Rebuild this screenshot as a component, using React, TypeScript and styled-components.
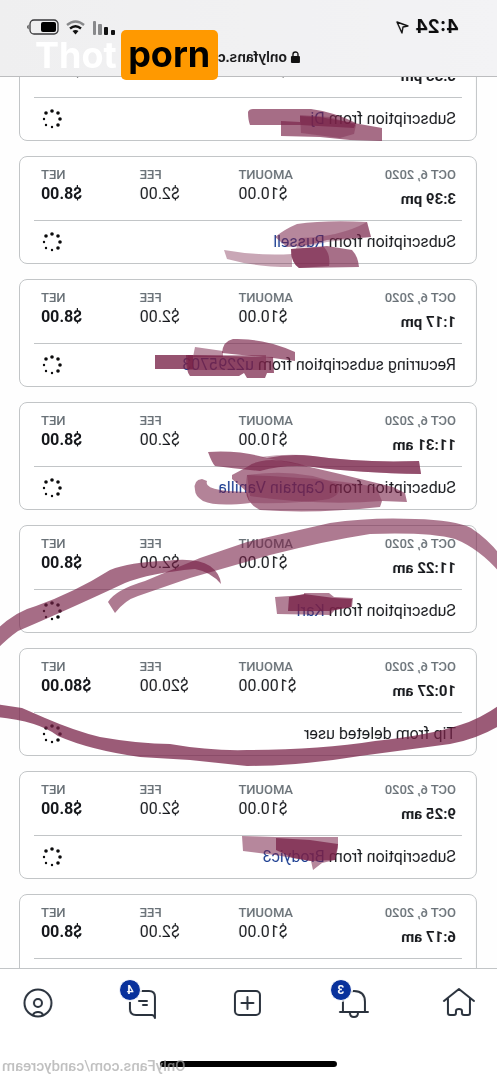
import React from "react";
import styled, { createGlobalStyle } from "styled-components";

const GlobalStyle = createGlobalStyle`
  * { box-sizing: border-box; }
  body { margin: 0; background: #fefefe; }
`;

const Frame = styled.div`
  position: relative;
  height: 100vh;
  overflow: hidden;
  font-family: Roboto, "Liberation Sans", sans-serif;
  color: #16181c;
`;

/* The whole phone screen is shown flipped, as in a front camera picture. */
const Screen = styled.div`
  display: flex;
  flex-direction: column;
  height: 100%;
  transform: scaleX(-1);
`;

const Header = styled.header`
  position: relative;
  z-index: 1;
  flex: none;
  height: 77px;
  padding: 15px 26px 0 38px;
  background: linear-gradient(90deg, #f3f3f5, #efeff0);
  border-bottom: 1px solid #bcbdbf;
`;

const StatusBar = styled.div`
  display: flex;
  align-items: center;
  justify-content: space-between;
  height: 24px;
`;

const Clock = styled.div`
  display: flex;
  align-items: center;
  gap: 6px;
  font: 700 19px/24px Inter, sans-serif;
  color: #0c0c0d;
`;

const StatusIcons = styled.div`
  display: flex;
  align-items: center;
  gap: 7px;
`;

const AddressBar = styled.div`
  display: flex;
  align-items: center;
  justify-content: center;
  gap: 4px;
  margin-top: 8px;
  margin-right: 12px;
  font: 600 14px/20px "Liberation Sans", sans-serif;
  color: #161617;
`;

const List = styled.ul`
  flex: 1;
  min-height: 0;
  margin: -44px 0 0;
  padding: 0 19px 0 20px;
  display: flex;
  flex-direction: column;
  gap: 15px;
  list-style: none;
  overflow: hidden;
`;

const Card = styled.li`
  flex: none;
  height: 108px;
  padding: 0 14px;
  border: 1px solid #c2c5c7;
  border-radius: 8px;
  background: #fff;
`;

const Figures = styled.div`
  display: grid;
  grid-template-columns: 6fr 5fr 5fr 5fr;
  height: 64px;
  padding: 9px 7px 0 6px;
  border-bottom: 1px solid #c2c5c7;
`;

const Column = styled.div<{ $end?: boolean }>`
  text-align: ${(p) => (p.$end ? "right" : "left")};
`;

const Label = styled.div`
  font-size: 13px;
  line-height: 18px;
  font-weight: 500;
  color: #6a7278;
  white-space: nowrap;
`;

const Value = styled.div<{ $bold?: boolean }>`
  font-size: 16px;
  line-height: 20px;
  font-weight: ${(p) => (p.$bold ? 700 : 400)};
`;

const Time = styled.div`
  margin-top: 5px;
  font-size: 15px;
  line-height: 20px;
  font-weight: 700;
`;

const Detail = styled.div`
  display: flex;
  align-items: center;
  justify-content: space-between;
  height: 42px;
  padding: 0 7px 0 6px;
  font-size: 16px;
  line-height: 20px;
`;

const UserLink = styled.a`
  color: #1d3f92;
  text-decoration: none;
`;

const Nav = styled.nav`
  position: relative;
  z-index: 1;
  flex: none;
  display: flex;
  justify-content: space-between;
  height: 92px;
  padding: 18px 22px 0;
  border-top: 1px solid #c2c5c7;
  background: #fff;
`;

const NavLink = styled.a`
  position: relative;
  width: 32px;
  height: 32px;
  color: #2a323d;
`;

const Badge = styled.span`
  position: absolute;
  top: -8px;
  right: -8px;
  width: 22px;
  height: 22px;
  border: 1px solid #fff;
  outline: 1px solid #fff;
  border-radius: 50%;
  background: #08319c;
  color: #fff;
  font-size: 12px;
  font-weight: 700;
  line-height: 20px;
  text-align: center;
`;

const HomeStrip = styled.footer`
  position: relative;
  flex: none;
  height: 17px;
  background: #fff;
`;

const HomeIndicator = styled.div`
  width: 177px;
  height: 6px;
  margin: 1px auto 0;
  border-radius: 3px;
  background: #000;
`;

const Watermark = styled.div`
  position: absolute;
  right: 2px;
  bottom: 1px;
  font-size: 15px;
  line-height: 20px;
  font-weight: 500;
  color: rgba(165, 165, 165, 0.7);
`;

const Marker = styled.svg`
  position: absolute;
  top: 0;
  left: 0;
  width: 100%;
  pointer-events: none;
`;

const SiteLogo = styled.div`
  position: absolute;
  z-index: 2;
  top: 30px;
  left: 35px;
  display: flex;
  align-items: center;
  gap: 4px;
  font: 700 36px/50px Inter, "Liberation Sans", sans-serif;
  color: #fff;
`;

const LogoTag = styled.span`
  width: 97px;
  height: 50px;
  line-height: 48px;
  border-radius: 5px;
  background: #ff9900;
  color: #000;
  text-align: center;
`;

const LOADER_DOTS = [
  [10, 2, 2],
  [16, 4, 2],
  [18, 10, 1],
  [16, 16, 1],
  [10, 18, 1],
  [4, 16, 2],
  [2, 10, 2],
  [4, 4, 2],
];

const Loader = () => (
  <svg width="22" height="22" viewBox="-1 -1 22 22" aria-label="Pending">
    {LOADER_DOTS.map(([x, y, r], i) => (
      <circle key={i} cx={x} cy={y} r={r === 2 ? 1.8 : 1.2} fill="#0b0b0c" />
    ))}
  </svg>
);

interface Entry {
  time: string;
  amount: string;
  fee: string;
  net: string;
  text: string;
  user?: string;
}

const entries: Entry[] = [
  { time: "5:33 pm", amount: "$10.00", fee: "$2.00", net: "$8.00", text: "Subscription from", user: "Dj" },
  { time: "3:39 pm", amount: "$10.00", fee: "$2.00", net: "$8.00", text: "Subscription from", user: "Russell" },
  { time: "1:17 pm", amount: "$10.00", fee: "$2.00", net: "$8.00", text: "Recurring subscription from", user: "u2295703" },
  { time: "11:31 am", amount: "$10.00", fee: "$2.00", net: "$8.00", text: "Subscription from", user: "Captain Vanilla" },
  { time: "11:22 am", amount: "$10.00", fee: "$2.00", net: "$8.00", text: "Subscription from", user: "Karl" },
  { time: "10:27 am", amount: "$100.00", fee: "$20.00", net: "$80.00", text: "Tip from deleted user" },
  { time: "9:25 am", amount: "$10.00", fee: "$2.00", net: "$8.00", text: "Subscription from", user: "Brodyic3" },
  { time: "6:17 am", amount: "$10.00", fee: "$2.00", net: "$8.00", text: "Subscription from" },
];

const EntryCard = ({ entry }: { entry: Entry }) => (
  <Card>
    <Figures>
      <Column>
        <Label>OCT 6, 2020</Label>
        <Time>{entry.time}</Time>
      </Column>
      <Column $end>
        <Label>AMOUNT</Label>
        <Value>{entry.amount}</Value>
      </Column>
      <Column $end>
        <Label>FEE</Label>
        <Value>{entry.fee}</Value>
      </Column>
      <Column $end>
        <Label>NET</Label>
        <Value $bold>{entry.net}</Value>
      </Column>
    </Figures>
    <Detail>
      <span>
        {entry.text} {entry.user && <UserLink href="#user">{entry.user}</UserLink>}
      </span>
      <Loader />
    </Detail>
  </Card>
);

const Icon = ({ children }: { children: React.ReactNode }) => (
  <svg
    width="32"
    height="32"
    viewBox="0 0 32 32"
    fill="none"
    stroke="currentColor"
    strokeWidth="2"
    strokeLinecap="round"
    strokeLinejoin="round"
  >
    {children}
  </svg>
);

const Scribbles = () => (
  <Marker viewBox="0 0 497 1077" aria-hidden="true">
    <defs>
      <filter id="brush" x="-5%" y="-5%" width="110%" height="110%" colorInterpolationFilters="sRGB">
        <feGaussianBlur stdDeviation="0.7" />
      </filter>
    </defs>
    <g fill="#782248" fillOpacity="0.66" filter="url(#brush)">
      {/* first row */}
      <path d="M248 112Q249 109 253 109H311Q334 112 356 123L354 128L300 125H250Q248 120 248 112Z" />
      <path d="M281 121L300 122V116L320 117L382 128V141L350 140L320 137L281 136Z" />
      <path d="M300 115L330 117L356 125L354 134L340 138L301 133Z" fillOpacity="0.4" />
      {/* second row */}
      <path d="M275 237Q285 229 297 224Q325 220 367 222L371 237L327 240Q305 247 287 247Z" fillOpacity="0.54" />
      <path d="M300 238Q340 237 367 222L371 237L327 242L296 249Z" fillOpacity="0.34" />
      <path d="M224 250Q258 256 292 254V267Q255 267 227 259Z" fillOpacity="0.4" />
      <path d="M291 249L327 246L352 250Q358 256 359 267L299 268Q291 263 291 249Z" fillOpacity="0.65" />
      <path d="M291 249L324 247Q331 255 329 266L299 268Q291 263 291 249Z" fillOpacity="0.55" />
      {/* third row */}
      <path d="M155 355H193V369H155Z" fillOpacity="0.78" />
      <path d="M195 347L223 351V357H193Z" fillOpacity="0.5" />
      <path d="M222 353Q223 341 233 339Q265 338 295 352V361L273 358L222 353Z" />
      <path d="M186 355L273 357L274 373L267 373L265 378H247L244 373L239 376H190Q186 372 186 355Z" fillOpacity="0.72" />
      <path d="M188 355H266V370H188Z" fillOpacity="0.45" />
      {/* fourth row */}
      <path d="M208 452Q240 450 267 458Q290 453 313 456Q360 463 419 461L421 474Q360 473 313 467Q286 464 260 471Q230 468 215 466Q212 463 208 452Z" />
      <path d="M260 457Q290 453 313 456Q360 463 419 461L421 474Q360 473 313 467Z" fillOpacity="0.4" />
      <path d="M232 475L247 467Q266 453 310 467L340 474L393 487L405 493L407 502L382 501L380 507Q315 514 260 510Q246 503 246 491L232 479Z" fillOpacity="0.6" />
      <path d="M247 475Q300 468 337 484Q344 493 329 499Q300 504 250 503Q244 491 247 475Z" fillOpacity="0.34" />
      <path d="M247 475Q330 478 376 487L382 501Q320 506 250 496Z" fillOpacity="0.38" />
      <path d="M195 490Q193 480 202 479L207 481Q202 491 247 492L250 503Q216 507 203 501Q195 496 195 490Z" fillOpacity="0.56" />
      {/* fifth row */}
      <path d="M275 597L304 595V593H329L334 597L353 598L352 607L335 610L330 615L277 614Z" fillOpacity="0.58" />
      <path d="M289 597L304 594L334 598L352 599L351 607L329 611H288Z" fillOpacity="0.78" />
      {/* seventh row */}
      <path d="M242 836L275 837H338V848L335 860L322 863L313 870L311 861L293 858L275 855L243 851Z" fillOpacity="0.54" />
      <path d="M276 838L310 840L338 844L335 860L311 861L293 858L276 850Z" fillOpacity="0.74" />
    </g>
    {/* loop around the tip */}
    <g fill="#782248" fillOpacity="0.66" filter="url(#brush)">
      <path d="M221 584Q211 572 195 569Q150 573 125 583Q65 611 18 631Q8 638 -4 650V630Q16 611 36 606Q75 592 110 570Q130 562 165 561Q196 557 210 566Q220 573 221 584Z" />
      <path d="M115 613L108 602Q115 590 145 581L200 558L247 542L330 523Q370 517 415 519Q455 520 471 528Q489 540 501 556V574Q480 549 455 539Q430 532 370 534Q325 541 270 555L190 578L138 596Q125 600 115 613Z" fillOpacity="0.6" />
      <path d="M-4 704L22 708L45 718Q75 731 100 737Q140 744 170 744Q210 751 247 750Q320 750 375 741Q430 735 460 725Q480 719 501 704V725Q475 740 450 744L360 756Q300 766 247 766L190 760L140 757Q90 750 58 736Q38 721 -4 717Z" fillOpacity="0.74" />
    </g>
  </Marker>
);

export default function App() {
  return (
    <Frame>
      <GlobalStyle />
      <Screen>
        <Header>
          <StatusBar>
            <Clock>
              4:24
              <svg width="13" height="13" viewBox="0 0 13 13" fill="none" stroke="#111" strokeWidth="1.4" strokeLinejoin="round">
                <path d="M1 5L12 1L7 12L6 6Z" />
              </svg>
            </Clock>
            <StatusIcons>
              <svg width="23" height="15" viewBox="0 0 23 15">
                <rect x="0" y="10" width="4" height="5" rx="1" fill="#111" />
                <rect x="7" y="7" width="4" height="8" rx="1" fill="#111" />
                <rect x="13" y="4" width="4" height="11" rx="1" fill="#88898b" />
                <rect x="19" y="1" width="3" height="14" rx="1" fill="#88898b" />
              </svg>
              <svg width="19" height="15" viewBox="0 0 19 15" fill="none" strokeWidth="2.4">
                <path d="M1 5Q9.500 -2 18 5" stroke="#88898b" />
                <path d="M4 8.500Q9.500 4 15 8.500" stroke="#111" />
                <path d="M6.500 11Q9.500 9 12.500 11L9.500 14.500Z" fill="#111" />
              </svg>
              <svg width="33" height="16" viewBox="0 0 33 16">
                <rect x="1" y="1" width="28" height="14" rx="4" fill="none" stroke="#3a3a3c" strokeWidth="1.300" />
                <rect x="3" y="3" width="15" height="10" rx="2" fill="#000" />
                <path d="M30.500 5.500Q33 8 30.500 10.500Z" fill="#222" />
              </svg>
            </StatusIcons>
          </StatusBar>
          <AddressBar>
            <svg width="9" height="12" viewBox="0 0 9 12">
              <rect x="0" y="5" width="9" height="7" rx="1" fill="#111" />
              <path d="M2 6V3.500Q2 1 4.500 1Q7 1 7 3.500V6" fill="none" stroke="#111" strokeWidth="1.400" />
            </svg>
            onlyfans.com
          </AddressBar>
        </Header>
        <List>
          {entries.map((entry) => (
            <EntryCard key={entry.time} entry={entry} />
          ))}
        </List>
        <Nav>
          <NavLink href="#home" aria-label="Home">
            <Icon>
              <path d="M1 14L16 2L31 14M5 11V26Q5 28 7 28H11Q13 28 13 26V24Q13 22 16 22Q19 22 19 24V26Q19 28 21 28H25Q27 28 27 26V11" />
            </Icon>
          </NavLink>
          <NavLink href="#notifications" aria-label="Notifications">
            <Icon>
              <path d="M2 25H30M5 25V15Q5 4 16 4Q27 4 27 15V25M12 26Q12 30 16 30Q20 30 20 26" />
            </Icon>
            <Badge>3</Badge>
          </NavLink>
          <NavLink href="#new" aria-label="New post">
            <Icon>
              <rect x="4" y="4" width="25" height="24" rx="4" />
              <path d="M16.500 10V22M10.500 16H22.500" />
            </Icon>
          </NavLink>
          <NavLink href="#messages" aria-label="Messages">
            <Icon>
              <path d="M4 31V10Q4 4 10 4H29V22Q29 28 23 28H7Q5 28 4 31ZM12 14H20M12 18H16" />
            </Icon>
            <Badge>4</Badge>
          </NavLink>
          <NavLink href="#profile" aria-label="Profile">
            <Icon>
              <circle cx="16" cy="16" r="13.500" />
              <circle cx="16" cy="16" r="4" />
              <path d="M11 28Q12 25 16 25Q20 25 21 28" />
            </Icon>
          </NavLink>
        </Nav>
        <HomeStrip>
          <HomeIndicator />
          <Watermark>OnlyFans.com/candycream</Watermark>
        </HomeStrip>
      </Screen>
      <Scribbles />
      <SiteLogo>
        Thot
        <LogoTag>porn</LogoTag>
      </SiteLogo>
    </Frame>
  );
}
